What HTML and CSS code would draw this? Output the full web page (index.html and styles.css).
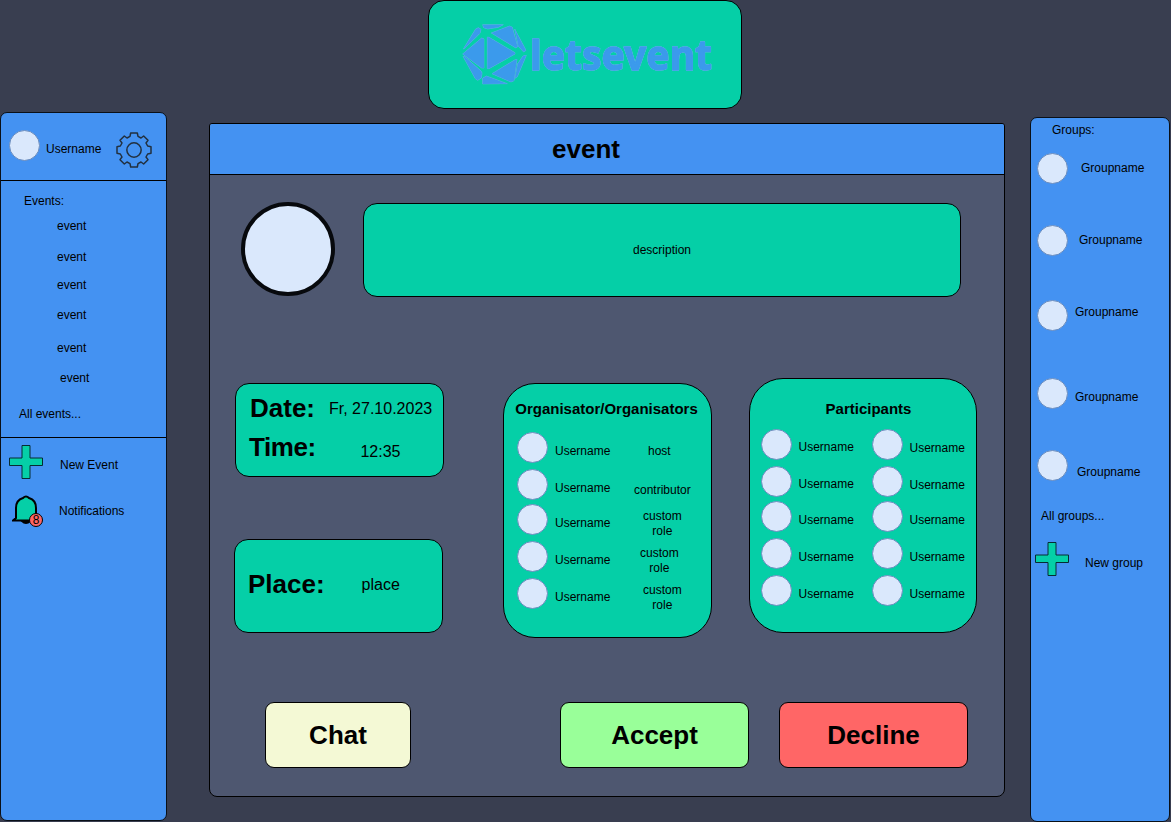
FILE: index.html
```html
<!DOCTYPE html>
<html lang="en">
<head>
<meta charset="utf-8">
<title>letsevent</title>
<link rel="stylesheet" href="styles.css">
</head>
<body>
<div class="page">
  <aside class="sidebar sidebar-left">
    <div class="user">
      <span class="avatar"></span>
      <span class="user-name">Username</span>
      <svg class="gear" viewBox="-54 -54 108 108"><path d="M-10-51H10L12-41L21-36L29-42L42-29L36-21L41-12L51-10V10L41 12L36 21L42 29L29 42L21 36L12 41L10 51H-10L-12 41L-21 36L-29 42L-42 29L-36 21L-41 12L-51 10V-10L-41-12L-36-21L-42-29L-29-42L-21-36L-12-41Z"/><circle r="21.500"/></svg>
    </div>
    <nav class="events">
      <div class="events-title">Events:</div>
      <ul class="event-list">
        <li>event</li><li>event</li><li>event</li><li>event</li><li>event</li><li class="shifted">event</li>
      </ul>
      <div class="all-events">All events...</div>
    </nav>
    <div class="actions">
      <div class="action">
        <svg class="plus" viewBox="0 0 34 34"><path d="M13 .5h8V13h12.500v7.500H21v13h-8v-13H.5V13H13z"/></svg>
        <span>New Event</span>
      </div>
      <div class="action notifications">
        <span class="bell-box">
          <svg class="bell" viewBox="0 0 32 30"><path class="clapper" d="M10 26h8q-4 4-8 0z"/><path d="M1 25.500L4 23V13Q4 5 11 3Q14 0 17 3Q24 5 24 13V23L27 25.500Z"/></svg>
          <span class="badge">8</span>
        </span>
        <span>Notifications</span>
      </div>
    </div>
  </aside>

  <main class="main">
    <header class="logo">
      <svg width="312" height="106" viewBox="429 1 312 106">
        <g class="mark" transform="translate(455 15) scale(.3333)">
          <path d="M83 29H145L130 37L98 42L86 38Z"/>
          <path d="M25 102L62 42L70 38L78 43L75 55L29 100Z"/>
          <path d="M23 117L80 69L87 72V159H80Z"/>
          <path d="M97 66L102 67L180 113V117L102 161H97Z"/>
          <path d="M109 54L164 33L172 37L188 95L183 99Z"/>
          <path d="M179 42L213 106L206 111L190 94Z"/>
          <path d="M214 121L204 123L188 146L180 190L187 185Z"/>
          <path d="M111 176L179 135L186 133L177 197L168 201Z"/>
          <path d="M83 207V190L94 183L157 206Z"/>
          <path d="M24 124L30 125L78 168L81 174L79 189L68 196L61 191Z"/>
        </g>
        <text class="wordmark" x="530" y="70" textLength="182" lengthAdjust="spacingAndGlyphs">letsevent</text>
      </svg>
    </header>

    <section class="panel">
      <h1 class="panel-title">event</h1>
      <div class="hero">
        <span class="event-picture"></span>
        <div class="description">description</div>
      </div>
      <div class="details">
        <div class="facts">
          <div class="card when">
            <b>Date:</b><span class="date">Fr, 27.10.2023</span>
            <b class="time-label">Time:</b><span class="time">12:35</span>
          </div>
          <div class="card where"><b>Place:</b><span>place</span></div>
        </div>
        <div class="card organisators">
          <h2>Organisator/Organisators</h2>
          <div class="people">
            <div class="person"><span class="avatar"></span><span class="name">Username</span><span class="role host">host</span></div>
            <div class="person"><span class="avatar"></span><span class="name">Username</span><span class="role contributor">contributor</span></div>
            <div class="person"><span class="avatar"></span><span class="name">Username</span><span class="role">custom<br>role</span></div>
            <div class="person"><span class="avatar"></span><span class="name">Username</span><span class="role narrow">custom<br>role</span></div>
            <div class="person"><span class="avatar"></span><span class="name">Username</span><span class="role">custom<br>role</span></div>
          </div>
        </div>
        <div class="card participants">
          <h2>Participants</h2>
          <div class="columns">
            <div class="people">
              <div class="person"><span class="avatar"></span><span class="name">Username</span></div>
              <div class="person"><span class="avatar"></span><span class="name">Username</span></div>
              <div class="person low"><span class="avatar"></span><span class="name">Username</span></div>
              <div class="person low"><span class="avatar"></span><span class="name">Username</span></div>
              <div class="person low"><span class="avatar"></span><span class="name">Username</span></div>
            </div>
            <div class="people">
              <div class="person low"><span class="avatar"></span><span class="name">Username</span></div>
              <div class="person low"><span class="avatar"></span><span class="name">Username</span></div>
              <div class="person low"><span class="avatar"></span><span class="name">Username</span></div>
              <div class="person low"><span class="avatar"></span><span class="name">Username</span></div>
              <div class="person low"><span class="avatar"></span><span class="name">Username</span></div>
            </div>
          </div>
        </div>
      </div>
      <div class="buttons">
        <button class="button chat">Chat</button>
        <button class="button accept">Accept</button>
        <button class="button decline">Decline</button>
      </div>
    </section>
  </main>

  <aside class="sidebar sidebar-right">
    <div class="groups-title">Groups:</div>
    <div class="groups">
      <div class="group g1"><span class="avatar"></span><span>Groupname</span></div>
      <div class="group g2"><span class="avatar"></span><span>Groupname</span></div>
      <div class="group g3"><span class="avatar"></span><span>Groupname</span></div>
      <div class="group g4"><span class="avatar"></span><span>Groupname</span></div>
      <div class="group g5"><span class="avatar"></span><span>Groupname</span></div>
    </div>
    <div class="all-groups">All groups...</div>
    <div class="action new-group">
      <svg class="plus" viewBox="0 0 34 34"><path d="M13 .5h8V13h12.500v7.500H21v13h-8v-13H.5V13H13z"/></svg>
      <span>New group</span>
    </div>
  </aside>
</div>
</body>
</html>
```

FILE: styles.css
```css
* { box-sizing: border-box; }
body {
  margin: 0;
  background: #393e50;
  color: #000;
  font: 12px/15px "Liberation Sans", Arial, sans-serif;
}
ul, h1, h2 { margin: 0; padding: 0; list-style: none; }

.page {
  display: grid;
  grid-template-columns: 209px 821px 141px;
  width: 1171px;
  height: 822px;
  overflow: hidden;
}

.avatar {
  display: block;
  flex: none;
  width: 31px;
  height: 31px;
  border: 1px solid #6c8ebf;
  border-radius: 50%;
  background: #dae8fc;
}

/* Sidebars */
.sidebar {
  background: #4492f2;
  border: 1px solid #0a1018;
  border-radius: 7px;
}
.sidebar-left { width: 167px; height: 709px; margin-top: 112px; }
.sidebar-right { width: 140px; height: 705px; margin-top: 117px; }

.user {
  display: flex;
  height: 68px;
  padding: 17px 0 0 8px;
  border-bottom: 1px solid #000;
}
.user-name { margin: 12px 0 0 6px; }
.gear {
  width: 36px;
  height: 36px;
  margin: 2px 0 0 15px;
  fill: none;
  stroke: #22303f;
  stroke-width: 4.500;
  stroke-linejoin: round;
}
.events { height: 257px; padding-top: 13px; border-bottom: 1px solid #000; }
.events-title { padding-left: 23px; }
.event-list {
  display: grid;
  grid-template-rows: 31px 28px 30px 33px 30px 36px;
  padding: 10px 0 0 56px;
}
.event-list .shifted { padding-left: 3px; }
.all-events { padding-left: 18px; }

.actions { padding: 7px 0 0 8px; }
.action { display: flex; align-items: center; gap: 17px; }
.action > span:last-child { margin-top: 6px; }
.plus {
  width: 34px;
  height: 34px;
  fill: #05cfa7;
  stroke: #062c33;
}
.notifications { margin-top: 16px; gap: 16px; align-items: flex-start; }
.notifications > span:last-child { margin-top: 9px; }
.bell-box { position: relative; width: 34px; height: 33px; padding-left: 3px; }
.bell {
  display: block;
  width: 32px;
  height: 30px;
  fill: #05cfa7;
  stroke: #000;
  stroke-width: 2;
}
.bell .clapper { fill: #000; }
.badge {
  position: absolute;
  left: 20px;
  top: 18px;
  width: 14px;
  height: 14px;
  border: 1px solid #000;
  border-radius: 50%;
  background: #ff6666;
  font-size: 12px;
  line-height: 12px;
  text-align: center;
}

.groups-title { padding: 5px 0 0 21px; }
.groups {
  display: grid;
  grid-template-rows: 72px 75px 78px 72px 31px;
  padding: 15px 0 0 6px;
}
.group { display: flex; align-items: flex-start; }
.g1 > :last-child { margin: 8px 0 0 13px; }
.g2 > :last-child { margin: 8px 0 0 11px; }
.g3 > :last-child { margin: 5px 0 0 7px; }
.g4 > :last-child { margin: 12px 0 0 7px; }
.g5 > :last-child { margin: 15px 0 0 9px; }
.all-groups { padding: 28px 0 0 10px; }
.new-group { margin: 18px 0 0 4px; gap: 16px; }
.new-group > span:last-child { margin-top: 8px; }

/* Centre column */
.main { width: 796px; }
.logo {
  width: 314px;
  height: 109px;
  margin-left: 219px;
  border: 1px solid #000;
  border-radius: 16px;
  background: #05cfa7;
}
.mark, .wordmark {
  fill: #3b9aec;
  stroke: #3b9aec;
  stroke-linejoin: round;
  filter: drop-shadow(0 0 .5px #9cc8e6);
}
.mark { stroke-width: 1; }
.wordmark {
  font: bold 42px "Noto Sans", sans-serif;
  stroke-width: 1.300;
}

.panel {
  height: 674px;
  margin-top: 14px;
  border: 1px solid #000;
  border-radius: 3px 3px 8px 8px;
  background: #4e5770;
}
.panel-title {
  height: 51px;
  padding-right: 42px;
  border-bottom: 1px solid #000;
  border-radius: 2px 2px 0 0;
  background: #4492f2;
  font-size: 26px;
  line-height: 50px;
  text-align: center;
}
.hero { display: flex; gap: 28px; height: 95px; margin: 27px 0 0 31px; }
.event-picture {
  width: 94px;
  height: 94px;
  border: 4px solid #07090d;
  border-radius: 50%;
  background: #dae8fc;
}
.description {
  width: 598px;
  height: 94px;
  margin-top: 1px;
  border: 1px solid #000;
  border-radius: 14px;
  background: #05cfa7;
  line-height: 92px;
  text-align: center;
}

.details { display: flex; height: 260px; margin: 81px 0 0 24px; }
.card { border: 1px solid #000; background: #05cfa7; }
.card b { font-size: 26px; line-height: 30px; }
.facts { width: 269px; font-size: 16px; padding-top: 5px; }
.when {
  display: grid;
  grid-template-columns: 79px 104px;
  grid-template-rows: 39px 30px;
  width: 209px;
  height: 94px;
  margin-left: 1px;
  padding: 9px 0 0 14px;
  border-radius: 14px;
}
.card .time-label { letter-spacing: -.4px; margin-left: -1px; }
.date { padding-top: 8px; }
.time { padding: 12px 1px 0 0; text-align: center; }
.where {
  display: flex;
  align-items: center;
  gap: 37px;
  width: 209px;
  height: 94px;
  margin-top: 62px;
  padding: 0 0 4px 13px;
  border-radius: 14px;
}

.card h2 { font-size: 15px; line-height: 18px; text-align: center; }
.people { display: grid; grid-template-rows: 37px 35px 37px 37px 31px; }
.person { display: flex; align-items: flex-start; }
.name { margin: 11px 0 0 7px; }
.low .name { margin-top: 12px; }

.organisators {
  width: 209px;
  height: 255px;
  margin-top: 5px;
  padding-top: 16px;
  border-radius: 32px;
}
.organisators h2 { padding-right: 2px; }
.organisators .people { padding: 14px 0 0 13px; }
.organisators .name { margin-top: 12px; }
.role { width: 76px; margin: 5px 0 0 14px; text-align: center; }
.role.host { margin: 12px 0 0 11px; }
.role.contributor { margin-top: 14px; }
.role.narrow { margin-left: 11px; }

.participants {
  width: 228px;
  height: 255px;
  margin-left: 37px;
  padding-top: 21px;
  border-radius: 34px;
}
.participants h2 { padding-left: 11px; }
.columns { display: flex; padding: 11px 0 0 11px; }
.columns .people { flex: none; width: 111px; }
.columns .name { margin-left: 6.500px; }

.buttons { display: flex; margin: 64px 0 0 55px; }
.button {
  height: 66px;
  padding: 0;
  border: 1px solid #000;
  border-radius: 9px;
  color: #000;
  font: bold 26px/30px "Liberation Sans", Arial, sans-serif;
}
.chat { width: 146px; background: #f4f9d5; }
.accept { width: 189px; margin-left: 149px; background: #99ff99; }
.decline { width: 189px; margin-left: 30px; background: #ff6666; }
```
